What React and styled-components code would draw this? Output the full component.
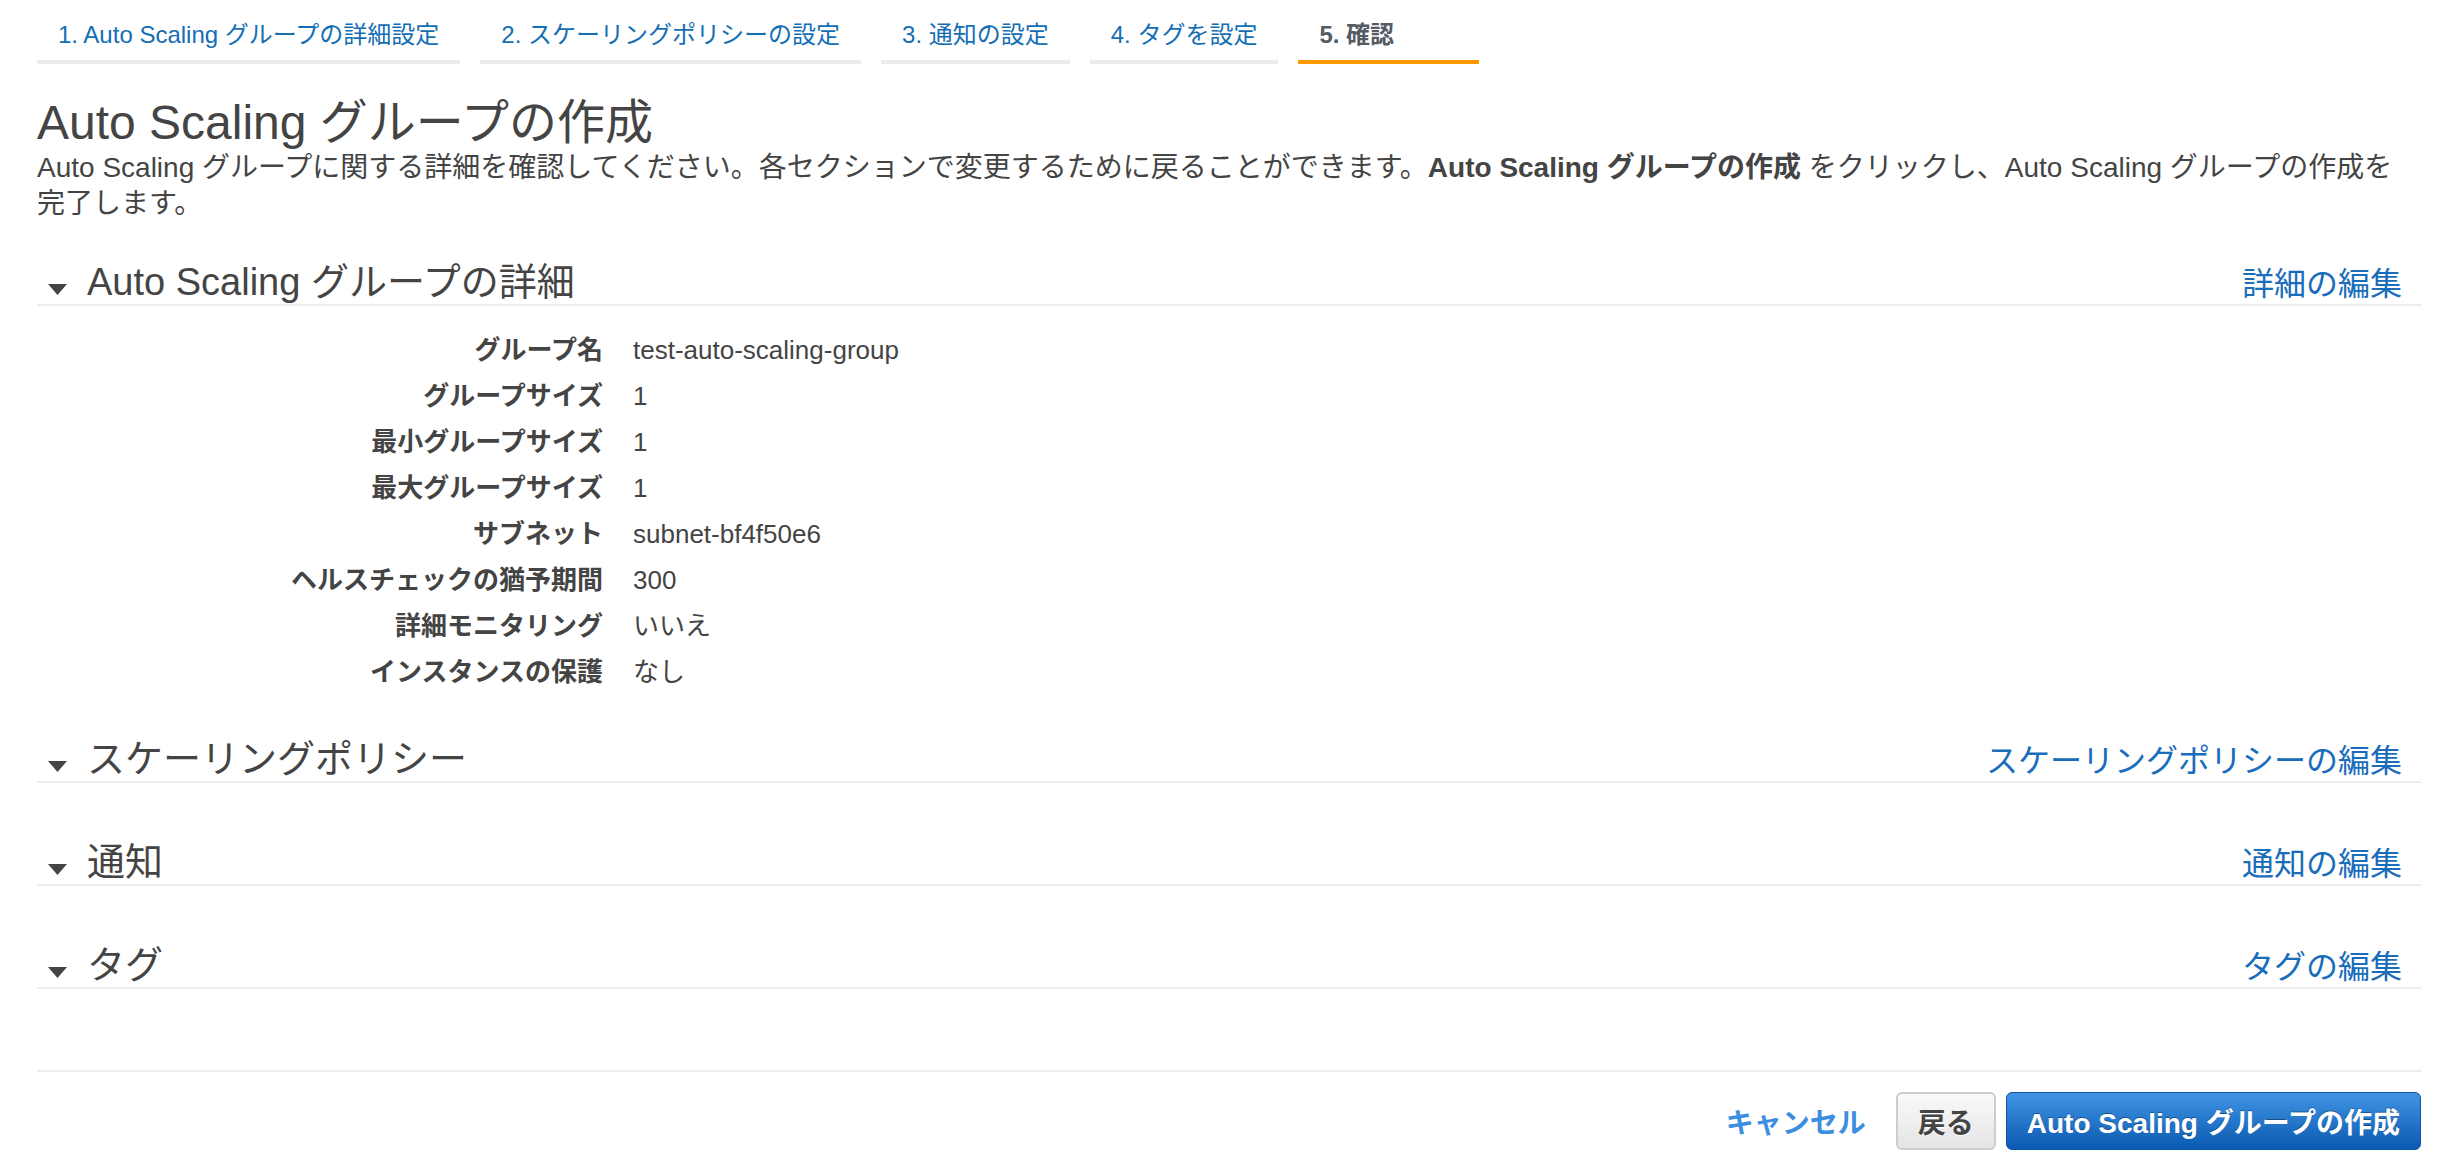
import React from 'react';
import styled, { createGlobalStyle } from 'styled-components';

const GlobalStyle = createGlobalStyle`
  body {
    margin: 0;
    background: #fff;
    color: #444;
    font-family: "Liberation Sans", "Noto Sans CJK JP", sans-serif;
  }
`;

const Page = styled.div`
  padding: 0 17px 40px 37px;
`;

const Steps = styled.div`
  display: flex;
  gap: 20px;
`;

const Step = styled.div`
  box-sizing: border-box;
  min-width: 181px;
  padding: 20px 21px 10px;
  font-size: 24px;
  line-height: 30px;
  white-space: nowrap;
  color: ${p => (p.$active ? '#545b64' : '#146eb4')};
  font-weight: ${p => (p.$active ? 'bold' : 'normal')};
  border-bottom: 4px solid ${p => (p.$active ? '#ff9900' : '#eaeded')};
`;

const Title = styled.h1`
  margin: 32px 0 0;
  font-size: 48px;
  line-height: 54px;
  font-weight: normal;
  color: #444;
`;

const Intro = styled.p`
  margin: 0;
  font-size: 28px;
  line-height: 36px;
`;

const Sections = styled.div`
  display: flex;
  flex-direction: column;
  margin-top: 32px;
`;

const Section = styled.section`
  margin-bottom: 30px;
`;

const SectionHeader = styled.div`
  display: flex;
  justify-content: space-between;
  align-items: baseline;
  height: 47px;
  padding: 3px 19px 0 11px;
  border-bottom: 2px solid #eaeded;
`;

const SectionTitle = styled.h2`
  display: flex;
  align-items: baseline;
  margin: 0;
  font-size: 38px;
  line-height: 50px;
  font-weight: normal;
  color: #444;

  svg {
    margin: 0 20px 6px 0;
  }
`;

const EditLink = styled.a`
  font-size: 32px;
  line-height: 50px;
  color: #1a6dbb;
  text-decoration: none;
  cursor: pointer;
`;

const SectionBody = styled.div`
  padding-top: 21px;
`;

const DetailGrid = styled.dl`
  display: grid;
  grid-template-columns: 566px 1fr;
  column-gap: 30px;
  margin: 0;
  padding-bottom: 6px;
  font-size: 26px;
  line-height: 46px;
`;

const Label = styled.dt`
  text-align: right;
  font-weight: bold;
`;

const Value = styled.dd`
  margin: 0;
`;

const Footer = styled.div`
  display: flex;
  justify-content: flex-end;
  align-items: center;
  gap: 10px;
  margin-top: 30px;
  padding-top: 20px;
  border-top: 2px solid #eaeded;
`;

const CancelLink = styled.a`
  padding: 0 20px;
  font-size: 28px;
  font-weight: bold;
  color: #3b8ee0;
  text-decoration: none;
  cursor: pointer;
`;

const Button = styled.button`
  box-sizing: border-box;
  height: 58px;
  padding: 0 20px;
  border-radius: 6px;
  font-family: inherit;
  font-size: 28px;
  font-weight: bold;
  cursor: pointer;
  color: ${p => (p.$primary ? '#fff' : '#444')};
  background: ${p =>
    p.$primary
      ? 'linear-gradient(#4194e4, #0a5ab1)'
      : 'linear-gradient(#fafafa, #e4e4e4)'};
  border: ${p => (p.$primary ? '1px solid #0b56a2' : '2px solid #cdcdcd')};
  text-shadow: ${p => (p.$primary ? '0 -1px 0 rgba(0,0,0,0.35)' : '0 1px 0 #fff')};
`;

const Caret = () => (
  <svg width="19" height="11" viewBox="0 0 19 11">
    <polygon points="0,0 19,0 9.5,11" fill="#444" />
  </svg>
);

const steps = [
  '1. Auto Scaling グループの詳細設定',
  '2. スケーリングポリシーの設定',
  '3. 通知の設定',
  '4. タグを設定',
  '5. 確認',
];

const details = [
  ['グループ名', 'test-auto-scaling-group'],
  ['グループサイズ', '1'],
  ['最小グループサイズ', '1'],
  ['最大グループサイズ', '1'],
  ['サブネット', 'subnet-bf4f50e6'],
  ['ヘルスチェックの猶予期間', '300'],
  ['詳細モニタリング', 'いいえ'],
  ['インスタンスの保護', 'なし'],
];

const Block = ({ title, edit, children }) => (
  <Section>
    <SectionHeader>
      <SectionTitle>
        <Caret />
        {title}
      </SectionTitle>
      <EditLink>{edit}</EditLink>
    </SectionHeader>
    <SectionBody>{children}</SectionBody>
  </Section>
);

const App = () => {
  return (
    <Page>
      <GlobalStyle />
      <Steps>
        {steps.map((s, i) => (
          <Step key={s} $active={i === steps.length - 1}>{s}</Step>
        ))}
      </Steps>

      <Title>Auto Scaling グループの作成</Title>
      <Intro>
        Auto Scaling グループに関する詳細を確認してください。各セクションで変更するために戻ることができます。
        <strong>Auto Scaling グループの作成</strong> をクリックし、Auto Scaling グループの作成を
        <br />
        完了します。
      </Intro>

      <Sections>
        <Block title="Auto Scaling グループの詳細" edit="詳細の編集">
          <DetailGrid>
            {details.map(([k, v]) => (
              <React.Fragment key={k}>
                <Label>{k}</Label>
                <Value>{v}</Value>
              </React.Fragment>
            ))}
          </DetailGrid>
        </Block>
        <Block title="スケーリングポリシー" edit="スケーリングポリシーの編集" />
        <Block title="通知" edit="通知の編集" />
        <Block title="タグ" edit="タグの編集" />
      </Sections>

      <Footer>
        <CancelLink>キャンセル</CancelLink>
        <Button>戻る</Button>
        <Button $primary>Auto Scaling グループの作成</Button>
      </Footer>
    </Page>
  );
};

export default App;
